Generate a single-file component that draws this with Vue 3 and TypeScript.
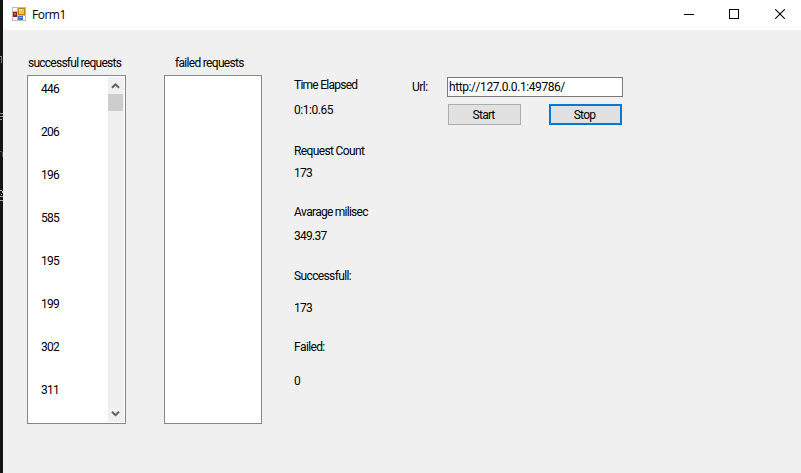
<script setup lang="ts">
import { ref } from 'vue'

const requests = ref<number[]>([446, 206, 196, 585, 195, 199, 302, 311])
const url = ref('http://127.0.0.1:49786/')

const stats = [
  { text: 'Time Elapsed', kind: 'label' },
  { text: '0:1:0.65', kind: 'elapsed' },
  { text: 'Request Count', kind: 'wide' },
  { text: '173', kind: 'num' },
  { text: 'Avarage milisec', kind: 'label' },
  { text: '349.37', kind: 'num' },
  { text: 'Successfull:', kind: 'wide' },
  { text: '173', kind: 'num' },
  { text: 'Failed:', kind: 'wide' },
  { text: '0', kind: 'num' },
]
</script>

<template>
  <div class="screen">
    <div class="backdrop">
      <svg width="3" height="473" shape-rendering="crispEdges">
        <path d="M0 56.5h2" stroke="#4f9fb5" />
        <path d="M1.5 57v6" stroke="#3b87a0" />
        <path d="M0 113.5h3M0 116.5h3M0 119.5h2" stroke="#a58a8c" />
        <path d="M0 151.5h2M2.5 152v5" stroke="#405963" />
        <path d="M0 190.5h2M2.5 191v2M1 194.5h1M0 196.5h3M0 200.5h3" stroke="#a5a5a5" />
      </svg>
    </div>
    <div class="window">
      <header class="titlebar">
        <svg class="app-icon" width="14" height="14" shape-rendering="crispEdges">
          <rect width="14" height="14" fill="#bdbdc0" />
          <path d="M1 1h4v3H1zM1 10h4v3H1zM6 9h7v4H6z" fill="#fff" />
          <rect x="6" y="1" width="7" height="7" fill="#b8860b" />
          <rect x="7" y="2" width="5" height="5" fill="#f5c542" />
          <rect x="7" y="2" width="3" height="2" fill="#ffe28a" />
          <rect x="1" y="5" width="4" height="5" fill="#a0180f" />
          <rect x="2" y="6" width="2" height="2" fill="#db5a4b" />
          <rect x="6" y="9" width="5" height="4" fill="#3d6fd0" />
          <rect x="7" y="10" width="3" height="1" fill="#86b2f5" />
        </svg>
        <span class="title">Form1</span>
        <div class="controls">
          <svg class="minimize" width="10" height="10"><path d="M0 5.5h10" stroke="#000" /></svg>
          <svg class="maximize" width="10" height="10"><rect x=".5" y=".5" width="9" height="9" fill="none" stroke="#000" /></svg>
          <svg width="10" height="10"><path d="M.2 .2L9.8 9.8M9.8 .2L.2 9.8" stroke="#000" stroke-width="1.1" /></svg>
        </div>
      </header>
      <main class="form">
        <section class="group first">
          <label class="caption ok">successful requests</label>
          <div class="listbox">
            <ul class="items">
              <li v-for="(value, i) in requests" :key="i" class="num">{{ value }}</li>
            </ul>
            <div class="scrollbar">
              <svg class="arrow" width="15" height="17">
                <path d="M4 10.8L7.5 7.3L11 10.8" fill="none" stroke="#606060" stroke-width="2" />
              </svg>
              <div class="thumb"></div>
              <svg class="arrow down" width="15" height="17">
                <path d="M4 6.7L7.5 10.2L11 6.7" fill="none" stroke="#606060" stroke-width="2" />
              </svg>
            </div>
          </div>
        </section>
        <section class="group second">
          <label class="caption bad">failed requests</label>
          <div class="listbox"></div>
        </section>
        <section class="stats">
          <span v-for="(s, i) in stats" :key="i" :class="s.kind">{{ s.text }}</span>
        </section>
        <section class="request">
          <div class="url-row">
            <label class="url-label">Url:</label>
            <div class="field"><span>{{ url }}</span></div>
          </div>
          <div class="buttons">
            <button>Start</button>
            <button class="focused">Stop</button>
          </div>
        </section>
      </main>
    </div>
  </div>
</template>

<style>
body { margin: 0; overflow: hidden; }
</style>

<style scoped>
* { box-sizing: border-box; }
.screen {
  display: flex;
  width: 801px;
  height: 473px;
  font: 12px/14px Roboto, "Liberation Sans", sans-serif;
  font-kerning: none;
  letter-spacing: -0.75px;
  color: #000;
  white-space: nowrap;
}
.backdrop { width: 3px; height: 473px; background: #151515; }
.backdrop svg { display: block; }
.window { flex: 1; background: #f0f0f0; }
.titlebar { display: flex; height: 30px; background: #fff; padding-left: 9px; }
.app-icon { margin-top: 7px; }
.title {
  margin: 7px 0 0 6px;
  font: 12px/16px "Open Sans", "Noto Sans", sans-serif;
  letter-spacing: -0.5px;
}
.controls { display: flex; gap: 36px; margin: 9px 16px 0 auto; }
.minimize { margin-right: -1px; }
.form { display: flex; align-items: flex-start; padding: 26px 0 0 24px; }
.group { display: flex; flex-direction: column; }
.first { width: 99px; margin-right: 38px; }
.second { width: 98px; margin-right: 32px; }
.caption { height: 19px; }
.ok { padding-left: 1px; }
.bad { padding-left: 11px; letter-spacing: -0.7px; }
.listbox {
  display: flex;
  justify-content: space-between;
  height: 349px;
  background: #fff;
  border: 1px solid #828790;
  padding: 1px;
}
.items { list-style: none; margin: 0; padding: 5px 0 0 12px; }
.items li { height: 43px; }
.num { letter-spacing: -0.75px; }
.elapsed { letter-spacing: -0.45px; }
.wide { letter-spacing: -0.63px; }
.scrollbar { display: flex; flex-direction: column; width: 16px; background: #f0f0f0; }
.arrow { display: block; }
.down { margin-top: auto; }
.thumb { width: 15px; height: 17px; background: #cdcdcd; }
.stats {
  display: grid;
  grid-template-rows: 25px 41px 22px 39px 24px 40px 32px 39px 34px 14px;
  width: 118px;
  padding-top: 22px;
}
.request { padding-top: 21px; }
.url-row { display: flex; }
.url-label { width: 35px; padding-top: 3px; letter-spacing: -0.5px; }
.field {
  width: 176px;
  height: 20px;
  padding: 2px 1px;
  background: #fff;
  border: 1px solid #7a7a7a;
  letter-spacing: -0.42px;
}
.buttons { display: flex; gap: 28px; margin: 7px 0 0 36px; }
button {
  width: 73px;
  height: 21px;
  padding: 0 2px 0 0;
  background: #e1e1e1;
  border: 1px solid #adadad;
  font: inherit;
  font-kerning: none;
  letter-spacing: inherit;
  color: inherit;
}
.focused { border: 2px solid #0078d7; }
</style>
